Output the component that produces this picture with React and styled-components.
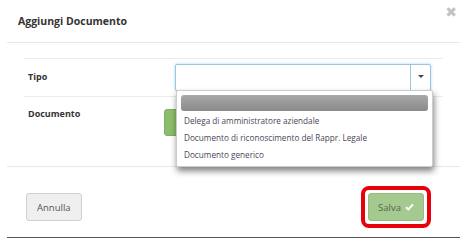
import React from 'react';
import styled, { createGlobalStyle } from 'styled-components';

const GlobalStyle = createGlobalStyle`
  html, body {
    margin: 0;
    padding: 0;
    background: #fff;
  }
  body {
    font-family: 'Open Sans', 'DejaVu Sans', sans-serif;
    color: #333;
  }
`;

const Modal = styled.div`
  position: relative;
  margin: 0 8px 0 7px;
  width: 453px;
  height: 238px;
  box-sizing: border-box;
  border-bottom: 1px solid #555;
  background: #fff;
`;

const Header = styled.div`
  display: flex;
  align-items: center;
  justify-content: space-between;
  height: 43px;
  padding: 0 3px 0 11px;
  box-sizing: border-box;
  border-bottom: 1px solid #e8e8e8;
`;

const Title = styled.h4`
  margin: 0;
  font-size: 10.5px;
  font-weight: 700;
  color: #333;
`;

const Close = styled.span`
  align-self: flex-start;
  margin-top: 5px;
  font-family: 'DejaVu Sans', sans-serif;
  font-size: 14px;
  font-weight: 700;
  line-height: 1;
  color: #c2c2c2;
`;

const Body = styled.div`
  position: relative;
  padding: 15px 17px 0;
  height: 124px;
  box-sizing: border-box;
  border-bottom: 1px solid #e8e8e8;
`;

const Row = styled.div`
  display: grid;
  grid-template-columns: ${p => p.$labelWidth}px 1fr;
  align-items: ${p => (p.$top ? 'start' : 'center')};
  height: ${p => p.$height}px;
  border-top: ${p => (p.$first ? '1px solid #ececec' : 'none')};
  border-bottom: ${p => (p.$last ? 'none' : '1px solid #ececec')};
  box-sizing: border-box;
  padding: ${p => (p.$top ? '10px' : '0')} 12px 0 4px;
`;

const Label = styled.label`
  font-size: 9px;
  font-weight: 700;
  color: #333;
  margin-top: ${p => p.$shift || 0}px;
`;

const Select = styled.div`
  display: flex;
  height: 27px;
  box-sizing: border-box;
  border: 1px solid #9ec5e0;
  border-radius: 2px;
  box-shadow: 0 0 3px rgba(102, 175, 233, 0.55);
  background: #fff;
`;

const SelectValue = styled.div`
  flex: 1;
`;

const SelectArrow = styled.div`
  width: 19px;
  display: flex;
  align-items: center;
  justify-content: center;
  border-left: 1px solid #9ec5e0;
  &::after {
    content: '';
    border-left: 3px solid transparent;
    border-right: 3px solid transparent;
    border-top: 3px solid #444;
    margin-top: -2px;
  }
`;

const UploadButton = styled.div`
  width: 40px;
  height: 27px;
  margin-top: 2px;
  border-radius: 3px;
  background: #8dbd6c;
  border: 1px solid #7eae5e;
  box-sizing: border-box;
`;

const Dropdown = styled.ul`
  position: absolute;
  top: 47px;
  left: 169px;
  width: 257px;
  margin: 0;
  padding: 4px 4px 3px;
  box-sizing: border-box;
  list-style: none;
  background: #fff;
  border: 1px solid #ccc;
  border-radius: 2px;
  box-shadow: 1px 4px 6px rgba(0, 0, 0, 0.5);
  z-index: 10;
`;

const Option = styled.li`
  height: ${p => (p.$placeholder ? 16 : 17)}px;
  line-height: 17px;
  padding: 0 3px;
  font-size: 8.2px;
  color: #4a4658;
  white-space: nowrap;
  border-radius: ${p => (p.$placeholder ? '3px' : '0')};
  background: ${p => (p.$placeholder ? 'linear-gradient(#a8a8a8, #8a8a8a)' : 'transparent')};
  margin-bottom: ${p => (p.$placeholder ? '1px' : '0')};
`;

const Footer = styled.div`
  display: flex;
  align-items: center;
  justify-content: space-between;
  padding: 19px 29px 0 19px;
`;

const Button = styled.button`
  display: inline-flex;
  align-items: center;
  gap: 4px;
  height: 28px;
  padding: 0 ${p => (p.$primary ? 9 : 10)}px;
  font-family: 'Open Sans', 'DejaVu Sans', sans-serif;
  font-size: 9.5px;
  border-radius: 3px;
  border: 1px solid ${p => (p.$primary ? '#95bd80' : '#d0d0d0')};
  background: ${p => (p.$primary ? '#a4ca8f' : '#efefef')};
  color: ${p => (p.$primary ? '#56654c' : '#555')};
`;

const Highlight = styled.div`
  display: flex;
  padding: 3px;
  border: 4px solid #e8000b;
  border-radius: 8px;
`;

const Check = () => (
  <svg width="9" height="8" viewBox="0 0 9 8">
    <path d="M1 4.2 L3.4 6.4 L8 1.4" fill="none" stroke="#fff" strokeWidth="2" />
  </svg>
);

export default function App() {
  return (
    <>
      <GlobalStyle />
      <Modal>
        <Header>
          <Title>Aggiungi Documento</Title>
          <Close>✖</Close>
        </Header>
        <Body>
          <Row $first $labelWidth={147} $height={39}>
            <Label $shift={-3}>Tipo</Label>
            <Select>
              <SelectValue />
              <SelectArrow />
            </Select>
          </Row>
          <Row $last $top $labelWidth={136} $height={60}>
            <Label>Documento</Label>
            <UploadButton />
          </Row>
          <Dropdown>
            <Option $placeholder />
            <Option>Delega di amministratore aziendale</Option>
            <Option>Documento di riconoscimento del Rappr. Legale</Option>
            <Option>Documento generico</Option>
          </Dropdown>
        </Body>
        <Footer>
          <Button>Annulla</Button>
          <Highlight>
            <Button $primary>
              Salva <Check />
            </Button>
          </Highlight>
        </Footer>
      </Modal>
    </>
  );
}
